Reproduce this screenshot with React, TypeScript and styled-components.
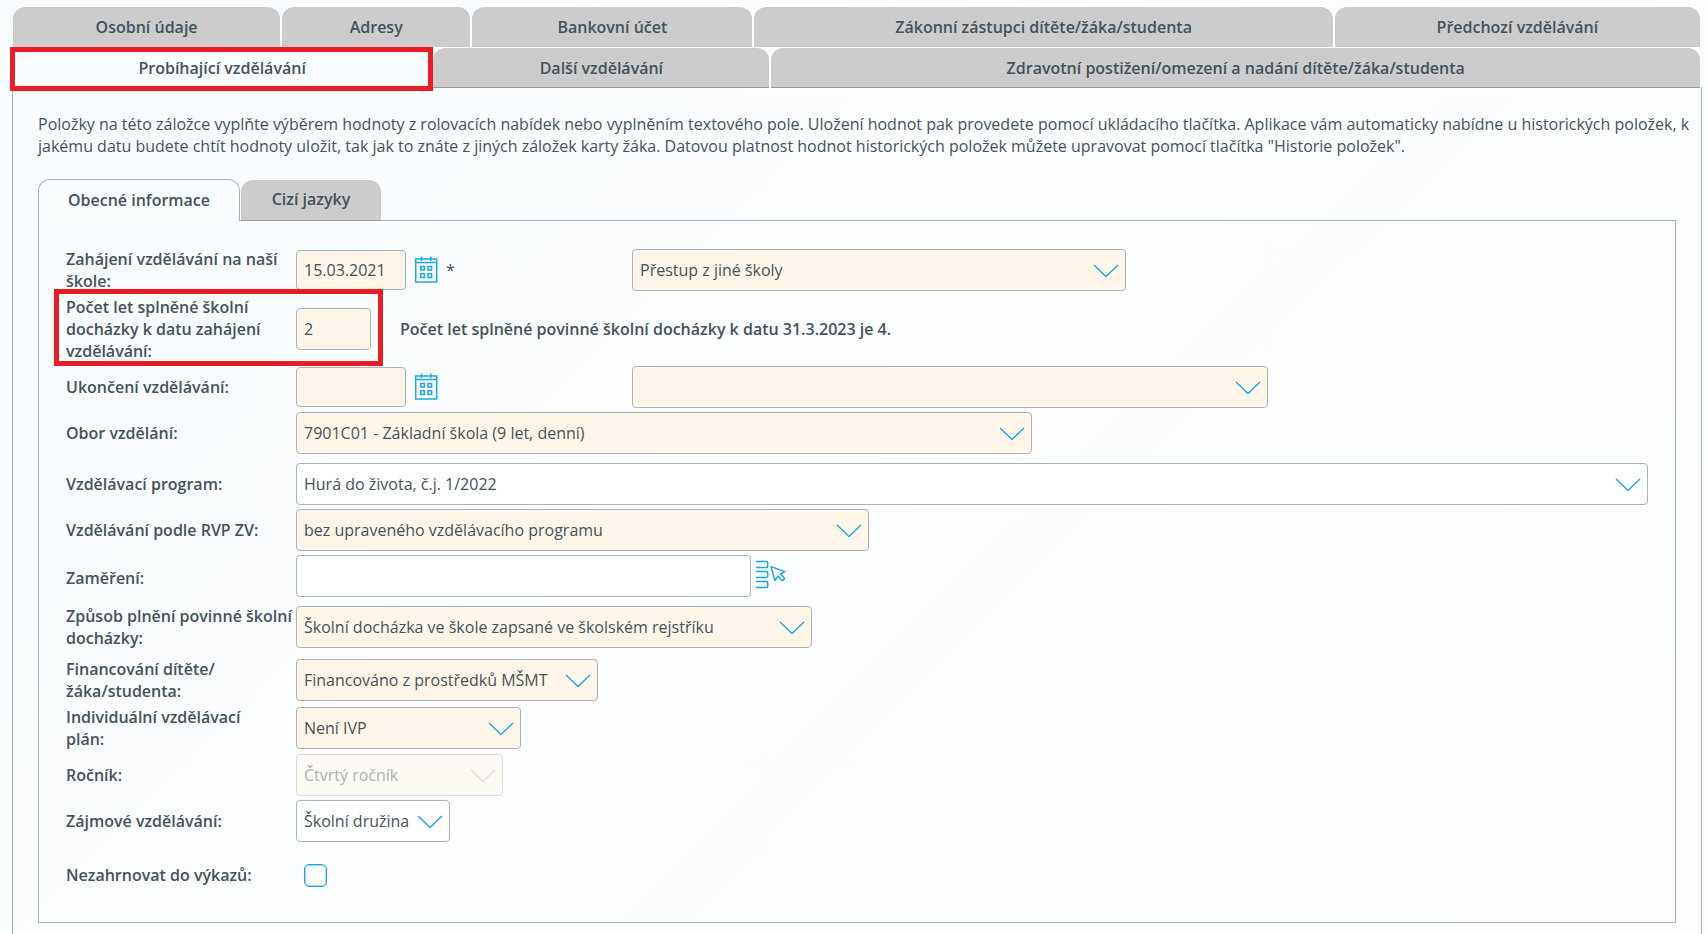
import React, { useState } from "react";
import styled, { createGlobalStyle, css } from "styled-components";

const color = {
  text: "#43535b",
  line: "#a6b4bb",
  edge: "#9c9c9c",
  grey: "#cccccc",
  cream: "#fff6e9",
  blue: "#1ba7e5",
  red: "#ed1c24",
};

const GlobalStyle = createGlobalStyle`
  *, *::before, *::after { box-sizing: border-box; }
  html { background: linear-gradient(135deg, #f8fcff 0%, #fbfdfe 40%, #fdfdfd 100%) fixed; }
  body {
    margin: 0;
    color: ${color.text};
    font: 400 16px/22px "Open Sans", "Noto Sans", sans-serif;
  }
  button, input, select { font: inherit; color: inherit; }
`;

const Page = styled.main`
  display: flex;
  flex-direction: column;
  min-height: 100vh;
  padding: 7px 6px 0 12px;
`;

const TabRows = styled.div`
  display: flex;
  flex-direction: column;
  gap: 1px;
  padding: 0 2px 0 1px;
`;

const TabRow = styled.div`
  display: flex;
  gap: 2px;
`;

const Tab = styled.button<{ $grow: number; $active: boolean; $bottom: boolean }>`
  position: relative;
  flex: ${(p) => p.$grow} 1 0;
  min-width: 0;
  height: 40px;
  padding: 0 0 1px;
  border: 0;
  border-radius: 12px 12px 0 0;
  background: ${(p) => (p.$active ? "transparent" : color.grey)};
  box-shadow: ${(p) =>
    p.$active ? "none" : p.$bottom ? `0 0 0 1px #fff, inset 0 -1px 0 ${color.edge}` : "0 0 0 1px #fff"};
  font-weight: 600;
  cursor: pointer;
`;

const Highlight = styled.span<{ $kind: "tab" | "field" }>`
  position: absolute;
  border: 5px solid ${color.red};
  pointer-events: none;
  ${(p) =>
    p.$kind === "tab"
      ? css`
          inset: -1px -2px -3px -3px;
          z-index: 2;
        `
      : css`
          top: -7px;
          bottom: -4px;
          left: -12px;
          width: 329px;
        `}
`;

const Panel = styled.section`
  flex: 1;
  margin-top: -1px;
  padding: 25px 25px 10px;
  border: solid ${color.line};
  border-width: 1px 1px 0;
`;

const Intro = styled.p`
  margin: 0 -20px 22px 0;
`;

const SubTabRow = styled.div`
  display: flex;
  align-items: flex-end;
  gap: 1px;
`;

const SubTab = styled.button<{ $active: boolean; $w: number }>`
  position: relative;
  width: ${(p) => p.$w}px;
  height: ${(p) => (p.$active ? 42 : 41)}px;
  padding: 0 0 2px;
  border: 0 solid ${(p) => (p.$active ? color.line : color.edge)};
  border-width: ${(p) => (p.$active ? "1px 1px 0" : "0 0 1px")};
  border-radius: 12px 12px 0 0;
  background: ${(p) => (p.$active ? "#fafdfe" : color.grey)};
  font-weight: 600;
  cursor: pointer;
`;

const SubPanel = styled.form`
  display: flex;
  flex-direction: column;
  gap: 4px;
  margin-top: -1px;
  padding: 27px 27px 26px;
  border: 1px solid ${color.line};
`;

const Row = styled.div<{ $spaced?: boolean }>`
  position: relative;
  display: grid;
  grid-template-columns: 230px minmax(0, 1fr);
  align-items: center;
  min-height: 42px;
  margin-top: ${(p) => (p.$spaced ? 5 : 0)}px;
`;

const LastRow = styled(Row)`
  margin-top: 8px;
`;

const Label = styled.label`
  font-weight: 600;
`;

const Controls = styled.div`
  display: flex;
  align-items: center;
`;

const PickerControls = styled(Controls)`
  align-items: flex-start;
  height: 46px;
`;

const DateGroup = styled.div`
  display: flex;
  align-items: center;
  width: 336px;
`;

const fieldStyle = css`
  border: 1px solid ${color.line};
  border-radius: 4px;
  outline-color: ${color.blue};
  padding: 0 7px 1px;
`;

const TextField = styled.input<{ $w: number; $tall?: boolean; $plain?: boolean }>`
  ${fieldStyle}
  width: ${(p) => p.$w}px;
  height: ${(p) => (p.$tall ? 42 : 40)}px;
  background: ${(p) => (p.$plain ? "#fff" : color.cream)};
`;

const SelectBox = styled.div<{ $w?: number }>`
  position: relative;
  width: ${(p) => (p.$w ? `${p.$w}px` : "100%")};
`;

const Select = styled.select<{ $plain?: boolean }>`
  ${fieldStyle}
  display: block;
  width: 100%;
  height: 42px;
  padding-right: 34px;
  appearance: none;
  background: ${(p) => (p.$plain ? "#fff" : color.cream)};
  cursor: pointer;
  &:disabled {
    opacity: 1;
    color: #a9b2b6;
    border-color: #dcdcdc;
    background: #fdf9f3;
    cursor: default;
  }
`;

const ChevronIcon = styled.svg<{ $off?: boolean }>`
  position: absolute;
  right: 7px;
  top: 15px;
  width: 26px;
  height: 14px;
  fill: none;
  stroke: ${(p) => (p.$off ? "#dcdee0" : color.blue)};
  stroke-width: 1.4;
  pointer-events: none;
`;

const IconButton = styled.button<{ $left: number }>`
  display: flex;
  margin-left: ${(p) => p.$left}px;
  padding: 0;
  border: 0;
  background: none;
  cursor: pointer;
  svg { fill: none; stroke: ${color.blue}; }
`;

const Required = styled.span`
  margin-left: 8px;
`;

const Note = styled.strong`
  margin-left: 29px;
  font-weight: 600;
`;

const Check = styled.input`
  width: 23px;
  height: 23px;
  margin: 0 0 0 8px;
  appearance: none;
  border: 1px solid ${color.blue};
  border-radius: 5px;
  background: #fff;
  box-shadow: inset 0 0 0 1px #9fdaf5;
  &:checked { background: ${color.blue}; }
`;

const CalendarButton = ({ label }: { label: string }) => (
  <IconButton type="button" aria-label={label} $left={8}>
    <svg width="24" height="28" viewBox="0 0 24 28" strokeWidth="1.5">
      <path d="M1.7 3h21v23h-21zM1.7 6.5h21M7.5 0.5v4.5M16.8 0.5v4.5" />
      <path d="M6.8 10.4h3.6V14H6.8zM14 10.4h3.6V14H14zM6.8 17.8h3.6v3.6H6.8zM14 17.8h3.6v3.6H14z" />
    </svg>
  </IconButton>
);

const PickButton = () => (
  <IconButton type="button" aria-label="Vybrat zaměření" $left={4}>
    <svg width="32" height="36" viewBox="0 0 32 36" strokeWidth="1.5">
      <path d="M1 6.5h10.5q1.2 0 1.2 1.2v3.6q0 1.2-1.2 1.2H1M1 16.5h10.5q1.2 0 1.2 1.2v3.6q0 1.2-1.2 1.2H1M1 26.5h10.5q1.2 0 1.2 1.2v3.6q0 1.2-1.2 1.2H1" />
      <path d="M16 11.6l13.8 5-4.4 2.4 4 4q-.2 2.3-2.6 2.5l-4-4.2-2.8 4.2z" strokeLinejoin="round" />
    </svg>
  </IconButton>
);

type DropProps = { id?: string; value: string; w?: number; plain?: boolean; off?: boolean; label?: string };

const Drop = ({ id, value, w, plain, off, label }: DropProps) => (
  <SelectBox $w={w}>
    <Select id={id} $plain={plain} disabled={off} aria-label={label} defaultValue={value}>
      <option value={value}>{value}</option>
    </Select>
    <ChevronIcon $off={off} viewBox="0 0 26 14" aria-hidden="true">
      <path d="M1 1l12 11.5L25 1" />
    </ChevronIcon>
  </SelectBox>
);

const tabRows = [
  [
    { text: "Osobní údaje", grow: 267 },
    { text: "Adresy", grow: 188 },
    { text: "Bankovní účet", grow: 280 },
    { text: "Zákonní zástupci dítěte/žáka/studenta", grow: 578 },
    { text: "Předchozí vzdělávání", grow: 365 },
  ],
  [
    { text: "Probíhající vzdělávání", grow: 418 },
    { text: "Další vzdělávání", grow: 336 },
    { text: "Zdravotní postižení/omezení a nadání dítěte/žáka/studenta", grow: 928 },
  ],
];

const subTabs = [
  { text: "Obecné informace", width: 202 },
  { text: "Cizí jazyky", width: 140 },
];

export default function App() {
  const [tab, setTab] = useState("Probíhající vzdělávání");
  const [sub, setSub] = useState("Obecné informace");

  return (
    <>
      <GlobalStyle />
      <Page>
        <TabRows role="tablist">
          {tabRows.map((row, i) => (
            <TabRow key={row[0].text} role="presentation">
              {row.map((t) => (
                <Tab
                  key={t.text}
                  type="button"
                  role="tab"
                  aria-selected={tab === t.text}
                  $active={tab === t.text}
                  $bottom={i === tabRows.length - 1}
                  $grow={t.grow}
                  onClick={() => setTab(t.text)}
                >
                  {t.text}
                  {tab === t.text && <Highlight $kind="tab" />}
                </Tab>
              ))}
            </TabRow>
          ))}
        </TabRows>
        <Panel>
          <Intro>
            Položky na této záložce vyplňte výběrem hodnoty z rolovacích nabídek nebo vyplněním textového pole. Uložení
            hodnot pak provedete pomocí ukládacího tlačítka. Aplikace vám automaticky nabídne u historických položek, k
            jakému datu budete chtít hodnoty uložit, tak jak to znáte z jiných záložek karty žáka. Datovou platnost
            hodnot historických položek můžete upravovat pomocí tlačítka "Historie položek".
          </Intro>
          <SubTabRow role="tablist">
            {subTabs.map((t) => (
              <SubTab
                key={t.text}
                type="button"
                role="tab"
                aria-selected={sub === t.text}
                $active={sub === t.text}
                $w={t.width}
                onClick={() => setSub(t.text)}
              >
                {t.text}
              </SubTab>
            ))}
          </SubTabRow>
          <SubPanel>
            <Row>
              <Label htmlFor="start">Zahájení vzdělávání na naší škole:</Label>
              <Controls>
                <DateGroup>
                  <TextField id="start" $w={110} defaultValue="15.03.2021" />
                  <CalendarButton label="Vybrat datum zahájení" />
                  <Required>*</Required>
                </DateGroup>
                <Drop w={494} value="Přestup z jiné školy" label="Způsob zahájení" />
              </Controls>
            </Row>
            <Row>
              <Label htmlFor="years">Počet let splněné školní docházky k datu zahájení vzdělávání:</Label>
              <Controls>
                <TextField id="years" $w={75} $tall defaultValue="2" />
                <Note>Počet let splněné povinné školní docházky k datu 31.3.2023 je 4.</Note>
              </Controls>
              <Highlight $kind="field" />
            </Row>
            <Row>
              <Label htmlFor="end">Ukončení vzdělávání:</Label>
              <Controls>
                <DateGroup>
                  <TextField id="end" $w={110} />
                  <CalendarButton label="Vybrat datum ukončení" />
                </DateGroup>
                <Drop w={636} value="" label="Způsob ukončení" />
              </Controls>
            </Row>
            <Row>
              <Label htmlFor="field">Obor vzdělání:</Label>
              <Drop id="field" w={736} value="7901C01 - Základní škola (9 let, denní)" />
            </Row>
            <Row $spaced>
              <Label htmlFor="program">Vzdělávací program:</Label>
              <Drop id="program" plain value="Hurá do života, č.j. 1/2022" />
            </Row>
            <Row>
              <Label htmlFor="rvp">Vzdělávání podle RVP ZV:</Label>
              <Drop id="rvp" w={573} value="bez upraveného vzdělávacího programu" />
            </Row>
            <Row>
              <Label htmlFor="focus">Zaměření:</Label>
              <PickerControls>
                <TextField id="focus" $w={455} $tall $plain />
                <PickButton />
              </PickerControls>
            </Row>
            <Row>
              <Label htmlFor="mode">
                Způsob plnění povinné školní
                <br />
                docházky:
              </Label>
              <Drop id="mode" w={516} value="Školní docházka ve škole zapsané ve školském rejstříku" />
            </Row>
            <Row $spaced>
              <Label htmlFor="funding">
                Financování dítěte/
                <br />
                žáka/studenta:
              </Label>
              <Drop id="funding" w={302} value="Financováno z prostředků MŠMT" />
            </Row>
            <Row>
              <Label htmlFor="ivp">
                Individuální vzdělávací
                <br />
                plán:
              </Label>
              <Drop id="ivp" w={225} value="Není IVP" />
            </Row>
            <Row>
              <Label htmlFor="grade">Ročník:</Label>
              <Drop id="grade" w={207} off value="Čtvrtý ročník" />
            </Row>
            <Row>
              <Label htmlFor="club">Zájmové vzdělávání:</Label>
              <Drop id="club" w={154} plain value="Školní družina" />
            </Row>
            <LastRow>
              <Label htmlFor="exclude">Nezahrnovat do výkazů:</Label>
              <Controls>
                <Check id="exclude" type="checkbox" />
              </Controls>
            </LastRow>
          </SubPanel>
        </Panel>
      </Page>
    </>
  );
}
